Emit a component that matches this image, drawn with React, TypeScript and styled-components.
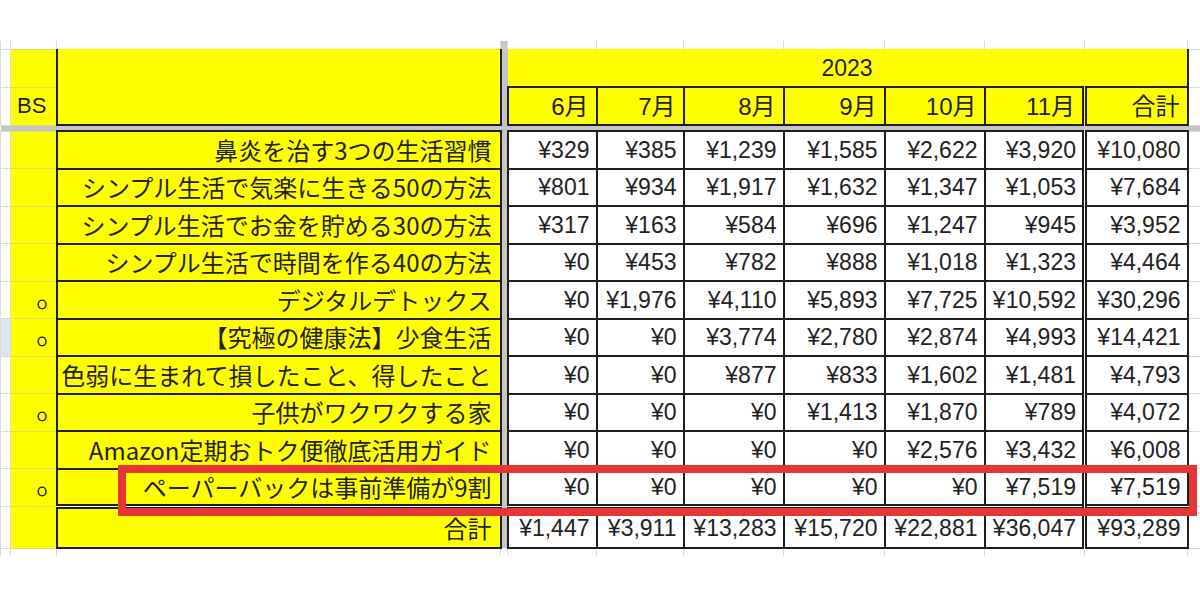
import React from "react";
import styled, { createGlobalStyle } from "styled-components";

const GlobalStyle = createGlobalStyle`
  html, body {
    margin: 0;
    padding: 0;
    background: #ffffff;
  }
  body {
    width: 1200px;
    height: 600px;
    overflow: hidden;
    font-family: "Liberation Sans", "Noto Sans CJK JP", sans-serif;
    color: #222222;
  }
`;

const INK = "#1e1e1e";
const GRID = "#dadada";
const YELLOW = "#ffff00";
const FREEZE = "#c4c4c4";

// sheet column widths, left to right (row stub, A, B, freeze, 6..11月, 合計, rest)
const columnWidths = [10, 46, 444, 7, 89, 87, 100, 101, 100, 100, 103, 13];

const months = ["6月", "7月", "8月", "9月", "10月", "11月"];

type Book = {
  mark: boolean;
  title: string;
  sales: number[];
  total: number;
};

const books: Book[] = [
  { mark: false, title: "鼻炎を治す3つの生活習慣", sales: [329, 385, 1239, 1585, 2622, 3920], total: 10080 },
  { mark: false, title: "シンプル生活で気楽に生きる50の方法", sales: [801, 934, 1917, 1632, 1347, 1053], total: 7684 },
  { mark: false, title: "シンプル生活でお金を貯める30の方法", sales: [317, 163, 584, 696, 1247, 945], total: 3952 },
  { mark: false, title: "シンプル生活で時間を作る40の方法", sales: [0, 453, 782, 888, 1018, 1323], total: 4464 },
  { mark: true, title: "デジタルデトックス", sales: [0, 1976, 4110, 5893, 7725, 10592], total: 30296 },
  { mark: true, title: "【究極の健康法】少食生活", sales: [0, 0, 3774, 2780, 2874, 4993], total: 14421 },
  { mark: false, title: "色弱に生まれて損したこと、得したこと", sales: [0, 0, 877, 833, 1602, 1481], total: 4793 },
  { mark: true, title: "子供がワクワクする家", sales: [0, 0, 0, 1413, 1870, 789], total: 4072 },
  { mark: false, title: "Amazon定期おトク便徹底活用ガイド", sales: [0, 0, 0, 0, 2576, 3432], total: 6008 },
  { mark: true, title: "ペーパーバックは事前準備が9割", sales: [0, 0, 0, 0, 0, 7519], total: 7519 },
];

const monthTotals = [1447, 3911, 13283, 15720, 22881, 36047];
const grandTotal = 93289;

const yen = (n: number) => "¥" + n.toLocaleString("en-US");

const Page = styled.div`
  padding-top: 41px;
`;

const SheetFrame = styled.div`
  position: relative;
  width: 1200px;
`;

const Sheet = styled.table`
  width: 1200px;
  table-layout: fixed;
  border-collapse: collapse;
  border-spacing: 0;
`;

const Col = styled.col<{ $w: number }>`
  width: ${(p) => p.$w}px;
`;

const StripRow = styled.tr`
  height: 8px;
  & > td {
    border-top: none;
    border-bottom: none;
  }
`;

const HeadRow = styled.tr`
  height: 38px;
`;

const FreezeRow = styled.tr`
  height: 6px;
  & > td {
    background: ${FREEZE};
    border: none;
    padding: 0;
  }
`;

const DataRow = styled.tr`
  height: 37.5px;
`;

const TotalRow = styled.tr`
  height: 42px;
`;

const GridCell = styled.td<{ $hl?: boolean }>`
  padding: 0;
  border: 1px solid ${GRID};
  background: ${(p) => (p.$hl ? "#dce6f4" : "#ffffff")};
`;

const FreezeCell = styled.td`
  padding: 0;
  border: none;
  background: ${FREEZE};
`;

const SideCell = styled.td<{ $label?: boolean }>`
  padding: ${(p) => (p.$label ? "0 0 0 6px" : "2px 9px 0 0")};
  border: 1px solid #dede66;
  background: ${YELLOW};
  text-align: ${(p) => (p.$label ? "left" : "right")};
  font-size: 22px;
  line-height: 1;
  white-space: nowrap;
  overflow: hidden;
`;

const Mark = styled.span`
  font-family: "Noto Sans CJK JP", sans-serif;
  font-size: 9px;
  -webkit-text-stroke: 0.9px ${INK};
  color: ${INK};
`;

const TitleCell = styled.td<{ $total?: boolean }>`
  padding: 0 8px 0 0;
  border: 2px solid ${INK};
  border-top: ${(p) => (p.$total ? `5px double ${INK}` : `2px solid ${INK}`)};
  background: ${YELLOW};
  text-align: right;
  font-family: "Noto Sans CJK JP", sans-serif;
  font-size: 24px;
  line-height: 1;
  white-space: nowrap;
  overflow: hidden;
`;

const TitleHead = styled.td`
  padding: 0;
  border-left: 2px solid ${INK};
  border-right: 2px solid ${INK};
  border-bottom: 2px solid ${INK};
  background: ${YELLOW};
`;

const YearCell = styled.td`
  padding: 1px 0 0;
  border-right: 2px solid ${INK};
  background: ${YELLOW};
  text-align: center;
  font-size: 23px;
  line-height: 1;
`;

const MonthCell = styled.td<{ $sum?: boolean }>`
  padding: 2px 7px 0 0;
  border: 2px solid ${INK};
  border-left: ${(p) => (p.$sum ? `5px double ${INK}` : `2px solid ${INK}`)};
  background: ${YELLOW};
  text-align: right;
  font-size: 24px;
  line-height: 1;
  white-space: nowrap;
`;

const NumCell = styled.td<{ $sum?: boolean; $total?: boolean }>`
  padding: 1px 6px 0 0;
  border: 2px solid ${INK};
  border-left: ${(p) => (p.$sum ? `5px double ${INK}` : `2px solid ${INK}`)};
  border-top: ${(p) => (p.$total ? `5px double ${INK}` : `2px solid ${INK}`)};
  background: #ffffff;
  text-align: right;
  font-size: 23px;
  line-height: 1;
  white-space: nowrap;
  overflow: hidden;
`;

// red annotation drawn over the ペーパーバック row
const RedMark = styled.div`
  position: absolute;
  left: 118px;
  top: 424px;
  width: 1079px;
  height: 51px;
  box-sizing: border-box;
  border: 8px solid #e63535;
  pointer-events: none;
`;

const App = () => {
  return (
    <>
      <GlobalStyle />
      <Page>
        <SheetFrame>
          <Sheet>
            <colgroup>
              {columnWidths.map((w, i) => (
                <Col key={i} $w={w} />
              ))}
            </colgroup>
            <tbody>
              <StripRow>
                <GridCell />
                <GridCell />
                <GridCell />
                <FreezeCell />
                {months.map((m) => (
                  <GridCell key={m} />
                ))}
                <GridCell />
                <GridCell />
              </StripRow>

              <HeadRow>
                <GridCell />
                <SideCell $label />
                <TitleHead rowSpan={2} />
                <FreezeCell />
                <YearCell colSpan={7}>2023</YearCell>
                <GridCell />
              </HeadRow>

              <HeadRow>
                <GridCell />
                <SideCell $label>BS</SideCell>
                <FreezeCell />
                {months.map((m) => (
                  <MonthCell key={m}>{m}</MonthCell>
                ))}
                <MonthCell $sum>合計</MonthCell>
                <GridCell />
              </HeadRow>

              <FreezeRow>
                {columnWidths.map((_, i) => (
                  <td key={i} />
                ))}
              </FreezeRow>

              {books.map((book, i) => (
                <DataRow key={book.title}>
                  <GridCell $hl={i === 5} />
                  <SideCell>{book.mark && <Mark>○</Mark>}</SideCell>
                  <TitleCell>{book.title}</TitleCell>
                  <FreezeCell />
                  {book.sales.map((v, j) => (
                    <NumCell key={j}>{yen(v)}</NumCell>
                  ))}
                  <NumCell $sum>{yen(book.total)}</NumCell>
                  <GridCell />
                </DataRow>
              ))}

              <TotalRow>
                <GridCell />
                <SideCell />
                <TitleCell $total>合計</TitleCell>
                <FreezeCell />
                {monthTotals.map((v, j) => (
                  <NumCell key={j} $total>
                    {yen(v)}
                  </NumCell>
                ))}
                <NumCell $sum $total>
                  {yen(grandTotal)}
                </NumCell>
                <GridCell />
              </TotalRow>

              <StripRow>
                <GridCell />
                <GridCell />
                <GridCell />
                <GridCell />
                {months.map((m) => (
                  <GridCell key={m} />
                ))}
                <GridCell />
                <GridCell />
              </StripRow>
            </tbody>
          </Sheet>
          <RedMark />
        </SheetFrame>
      </Page>
    </>
  );
};

export default App;
